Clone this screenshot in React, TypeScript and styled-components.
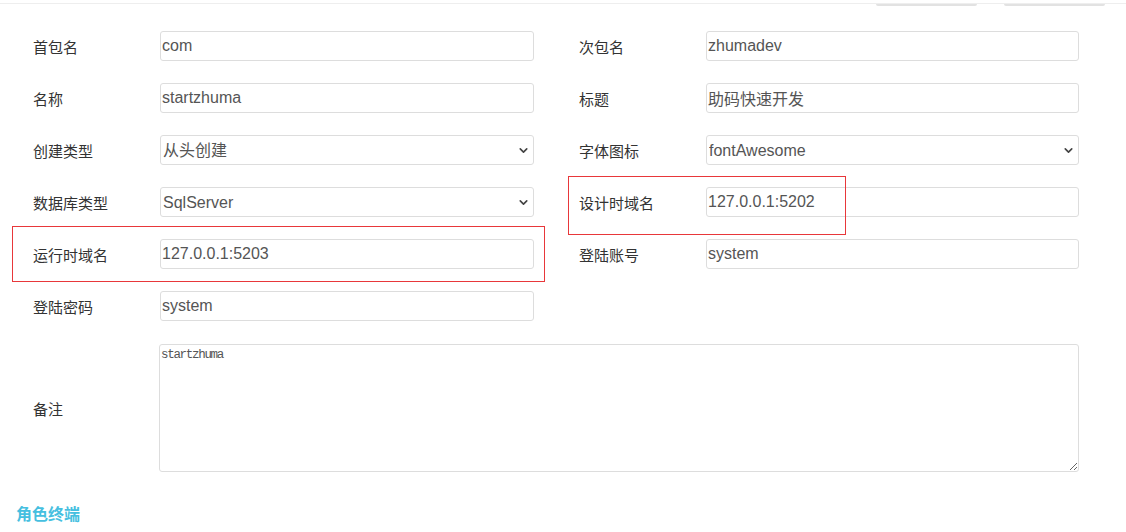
import { createGlobalStyle } from 'styled-components';
import styled from 'styled-components';
import { ChevronDown } from 'lucide-react';

const GlobalStyle = createGlobalStyle`
  html, body {
    margin: 0;
    background: #fff;
  }
  body {
    font-family: "Liberation Sans", "Noto Sans CJK SC", sans-serif;
    color: #333;
  }
`;

const Page = styled.div`
  width: 1126px;
  height: 532px;
  overflow: hidden;
  background: #fff;
`;

// remains of the toolbar above, scrolled nearly out of view
const TopStrip = styled.div`
  height: 3px;
  border-bottom: 1px solid #eeeeee;
`;

const TopButtons = styled.div`
  display: flex;
  gap: 27px;
  padding-left: 876px;
  height: 2px;
`;

const GhostButton = styled.div`
  width: 101px;
  height: 2px;
  border-radius: 0 0 4px 4px;
  background: #e2e2e2;
`;

const Form = styled.div`
  display: grid;
  grid-template-columns: 501px 500px;
  column-gap: 45px;
  row-gap: 22px;
  padding: 25px 0 0 33px;
`;

const Field = styled.div<{ $wide?: boolean }>`
  position: relative;
  display: flex;
  align-items: center;
  grid-column: ${(p) => (p.$wide ? '1 / span 2' : 'auto')};
  margin-top: ${(p) => (p.$wide ? '1px' : '0')};
`;

const Label = styled.label`
  flex: 0 0 127px;
  font-family: "Noto Sans CJK SC", sans-serif;
  font-size: 15px;
  color: #333;
`;

const Input = styled.input`
  flex: 1;
  min-width: 0;
  height: 30px;
  box-sizing: border-box;
  border: 1px solid #dddddd;
  border-radius: 3px;
  padding: 0 1px;
  font-family: "Liberation Sans", "Noto Sans CJK SC", sans-serif;
  font-size: 16px;
  color: #555;
  background: #fff;
  outline: none;
`;

const SelectBox = styled.div`
  position: relative;
  flex: 1;
  display: flex;
`;

const Select = styled.select`
  flex: 1;
  height: 30px;
  box-sizing: border-box;
  appearance: none;
  border: 1px solid #dddddd;
  border-radius: 3px;
  padding: 0 24px 0 2px;
  font-family: "Liberation Sans", "Noto Sans CJK SC", sans-serif;
  font-size: 16px;
  color: #555;
  background: #fff;
  outline: none;
`;

const Arrow = styled(ChevronDown)`
  position: absolute;
  right: 4px;
  top: 9px;
  pointer-events: none;
  color: #444;
`;

const TextArea = styled.textarea`
  flex: 1;
  height: 128px;
  box-sizing: border-box;
  margin-left: -1px;
  border: 1px solid #dddddd;
  border-radius: 3px;
  padding: 3px 1px;
  font-family: "Liberation Mono", monospace;
  font-size: 12.5px;
  letter-spacing: -1.3px;
  color: #555;
  outline: none;
`;

// annotation rectangle drawn over the screenshot
const Mark = styled.span<{ $l: number; $t: number; $w: number; $h: number }>`
  position: absolute;
  left: ${(p) => p.$l}px;
  top: ${(p) => p.$t}px;
  width: ${(p) => p.$w}px;
  height: ${(p) => p.$h}px;
  border: 1px solid #e8373a;
  box-sizing: border-box;
  pointer-events: none;
`;

const SectionTitle = styled.h3`
  margin: 29px 0 0 16px;
  font-family: "Noto Sans CJK SC", sans-serif;
  font-size: 16px;
  font-weight: bold;
  color: #46bfe0;
`;

const TextField = ({ label, value }: { label: string; value: string }) => (
  <>
    <Label>{label}</Label>
    <Input defaultValue={value} />
  </>
);

const SelectField = ({ label, options }: { label: string; options: string[] }) => (
  <>
    <Label>{label}</Label>
    <SelectBox>
      <Select defaultValue={options[0]}>
        {options.map((o) => (
          <option key={o}>{o}</option>
        ))}
      </Select>
      <Arrow size={13} strokeWidth={3} />
    </SelectBox>
  </>
);

export default function App() {
  return (
    <Page>
      <GlobalStyle />
      <TopStrip />
      <TopButtons>
        <GhostButton />
        <GhostButton />
      </TopButtons>

      <Form>
        <Field>
          <TextField label="首包名" value="com" />
        </Field>
        <Field>
          <TextField label="次包名" value="zhumadev" />
        </Field>
        <Field>
          <TextField label="名称" value="startzhuma" />
        </Field>
        <Field>
          <TextField label="标题" value="助码快速开发" />
        </Field>
        <Field>
          <SelectField label="创建类型" options={['从头创建', '从模板创建']} />
        </Field>
        <Field>
          <SelectField label="字体图标" options={['fontAwesome', 'iconfont']} />
        </Field>
        <Field>
          <SelectField label="数据库类型" options={['SqlServer', 'MySql', 'Oracle']} />
        </Field>
        <Field>
          <TextField label="设计时域名" value="127.0.0.1:5202" />
          <Mark $l={-11} $t={-11} $w={278} $h={59} />
        </Field>
        <Field>
          <TextField label="运行时域名" value="127.0.0.1:5203" />
          <Mark $l={-21} $t={-13} $w={533} $h={56} />
        </Field>
        <Field>
          <TextField label="登陆账号" value="system" />
        </Field>
        <Field>
          <TextField label="登陆密码" value="system" />
        </Field>
        <Field />
        <Field $wide>
          <Label>备注</Label>
          <TextArea defaultValue="startzhuma" />
        </Field>
      </Form>

      <SectionTitle>角色终端</SectionTitle>
    </Page>
  );
}
